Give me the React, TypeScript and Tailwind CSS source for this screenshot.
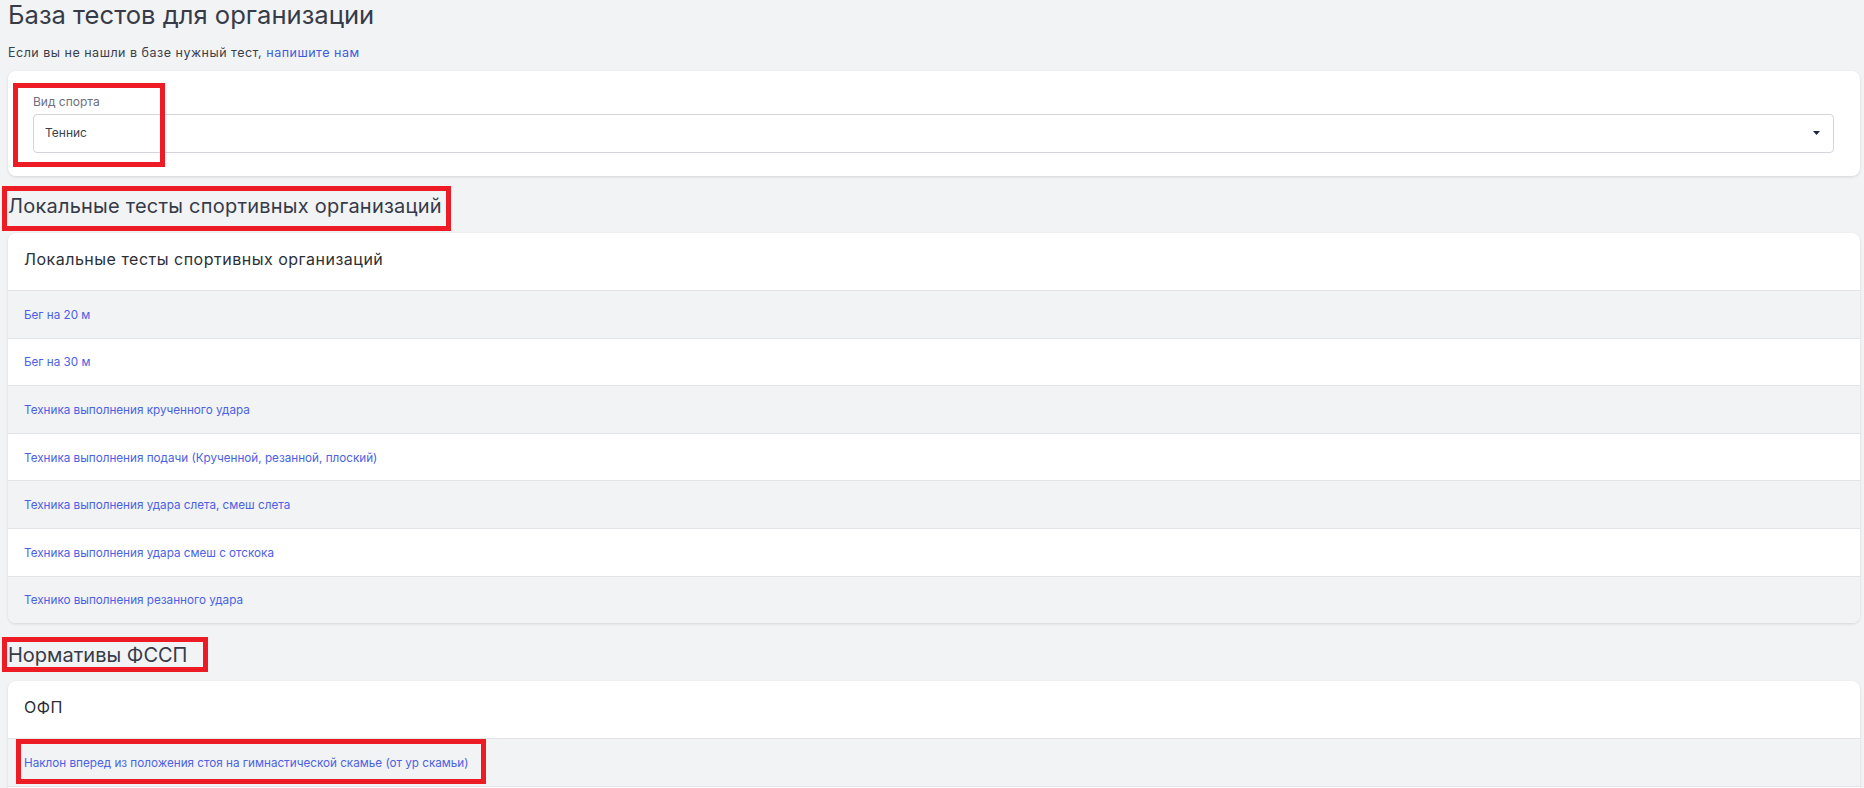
import React from "react";

const rows1 = [
  "Бег на 20 м",
  "Бег на 30 м",
  "Техника выполнения крученного удара",
  "Техника выполнения подачи (Крученной, резанной, плоский)",
  "Техника выполнения удара слета, смеш слета",
  "Техника выполнения удара смеш с отскока",
  "Технико выполнения резанного удара",
];

const rows2 = [
  "Наклон вперед из положения стоя на гимнастической скамье (от ур скамьи)",
  "",
];

function Row({ text, i }: { text: string; i: number }) {
  return (
    <div
      className={
        "h-[47.6px] border-t border-[#e3e4e8] flex items-center pl-[16px] " +
        (i % 2 === 0 ? "bg-[#f2f3f5]" : "bg-white")
      }
    >
      <a className="text-[11.7px] leading-[16px] text-[#4a62e3] pt-[1px]">{text}</a>
    </div>
  );
}

export default function App() {
  return (
    <div
      className="relative w-[1864px] min-h-[788px] bg-[#f2f3f5] pl-[8px] pr-[4px] pt-[1px] overflow-hidden"
      style={{ fontFamily: "Inter, 'Noto Sans', sans-serif" }}
    >
      <h1 className="text-[25.6px] leading-[27px] text-[#363b48] font-normal">
        База тестов для организации
      </h1>
      <p className="mt-[16.6px] text-[12.5px] leading-[16px] tracking-[0.5px] text-[#3a3f4a]">
        Если вы не нашли в базе нужный тест,{" "}
        <a className="text-[#3d5cdc]">напишите нам</a>
      </p>

      <div className="mt-[10.4px] bg-white rounded-lg shadow-[0_1px_3px_rgba(0,0,0,0.12)] pl-[25px] pr-[26px] pt-[22.6px] pb-[23px]">
        <div className="text-[12px] leading-[16px] text-[#6e7080]">Вид спорта</div>
        <div className="mt-[4.4px] h-[39px] border border-[#d3d4dc] rounded-[4px] flex items-center justify-between pl-[11px] pr-[13px]">
          <span className="text-[12px] leading-[16px] text-[#3a3f4a]">Теннис</span>
          <svg width="7" height="4" viewBox="0 0 7 4">
            <path d="M0 0 L7 0 L3.5 4 Z" fill="#1c2240" />
          </svg>
        </div>
      </div>

      <h2 className="mt-[17.7px] text-[20px] leading-[24px] tracking-[0.22px] text-[#363b48] font-normal">
        Локальные тесты спортивных организаций
      </h2>

      <div className="mt-[15.3px] bg-white rounded-lg shadow-[0_1px_3px_rgba(0,0,0,0.12)] overflow-hidden">
        <div className="pl-[16px] pt-[16px] pb-[21px] text-[16px] leading-[20px] tracking-[0.5px] text-[#2b2f37]">
          Локальные тесты спортивных организаций
        </div>
        {rows1.map((t, i) => (
          <Row key={i} text={t} i={i} />
        ))}
      </div>

      <h2 className="mt-[19.7px] text-[20px] leading-[24px] text-[#363b48] font-normal">
        Нормативы ФССП
      </h2>

      <div className="mt-[14.3px] bg-white rounded-lg shadow-[0_1px_3px_rgba(0,0,0,0.12)] overflow-hidden">
        <div className="pl-[16px] pt-[16px] pb-[21px] text-[16px] leading-[20px] tracking-[0.5px] text-[#2b2f37]">
          ОФП
        </div>
        {rows2.map((t, i) => (
          <Row key={i} text={t} i={i} />
        ))}
      </div>

      {/* red annotation boxes */}
      <div className="absolute left-[13px] top-[83px] w-[152px] h-[84px] border-[5px] border-[#ed1c24]" />
      <div className="absolute left-[2px] top-[186px] w-[449px] h-[45px] border-[5px] border-[#ed1c24]" />
      <div className="absolute left-[2px] top-[637px] w-[206px] h-[35px] border-[5px] border-[#ed1c24]" />
      <div className="absolute left-[16px] top-[739px] w-[470px] h-[45px] border-[5px] border-[#ed1c24]" />
    </div>
  );
}
